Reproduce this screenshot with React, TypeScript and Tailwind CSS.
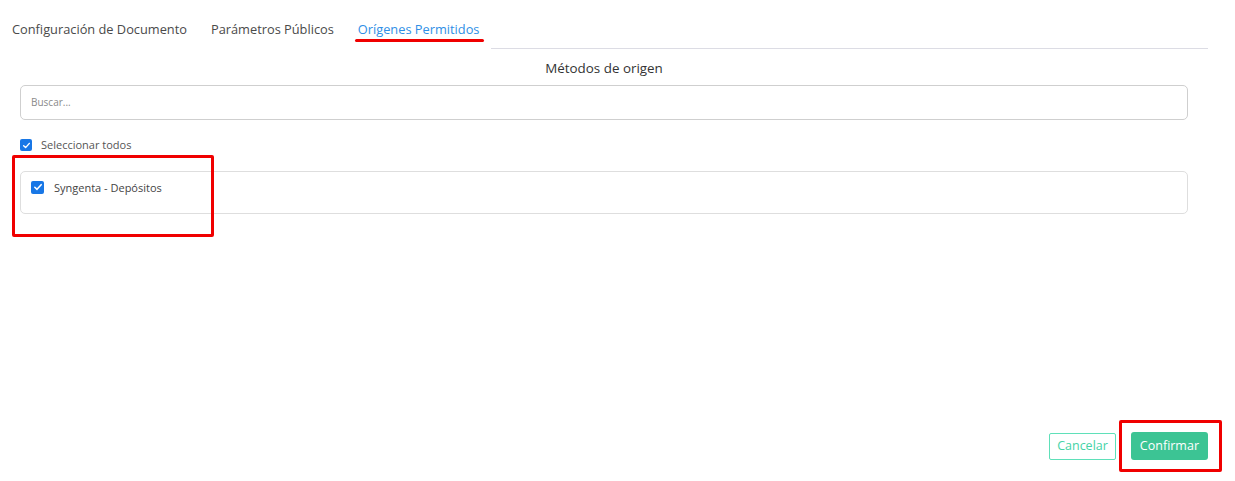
import React from "react";

function Check({ size = 13 }: { size?: number }) {
  return (
    <span
      className="inline-flex items-center justify-center rounded-[2px] bg-[#1877e6] shrink-0"
      style={{ width: size, height: size }}
    >
      <svg viewBox="0 0 12 12" width={size - 3} height={size - 3}>
        <path d="M2.2 6.3 L4.8 8.8 L9.8 3.2" fill="none" stroke="white" strokeWidth="1.9" strokeLinecap="round" strokeLinejoin="round" />
      </svg>
    </span>
  );
}

export default function App() {
  return (
    <div className="relative h-[481px] w-[1235px] bg-white flex flex-col" style={{ fontFamily: '"Open Sans", "Noto Sans", sans-serif' }}>
      {/* Tabs */}
      <div className="flex items-end w-[1208px] h-[49px]">
        <div className="flex items-end h-full">
          <div className="pl-[12px] pr-[24px] pb-[10px] text-[12.8px] text-[#4a4a4a]">Configuración de Documento</div>
          <div className="pr-[24px] pb-[10px] text-[12.8px] text-[#4a4a4a]">Parámetros Públicos</div>
          <div className="pb-[10px] pr-[12px] text-[12.8px] text-[#2f8fe6]">Orígenes Permitidos</div>
        </div>
        <div className="flex-1 border-b border-[#dcdce4]" />
      </div>

      <div className="w-[1208px] text-center text-[13.4px] text-[#333] font-medium mt-[9px]">Métodos de origen</div>

      <div className="mx-[20px] mt-[7px] w-[1168px] h-[35px] rounded-[5px] border border-[#cfcfcf] flex items-center pl-[10px] text-[10px] text-[#8a8a8a]">
        Buscar...
      </div>

      <div className="flex items-center gap-[9px] mx-[20px] mt-[17px]">
        <Check size={12} />
        <span className="text-[11px] text-[#555]">Seleccionar todos</span>
      </div>

      <div className="mx-[20px] mt-[17px] w-[1168px] h-[43px] rounded-[5px] border border-[#dedede] flex items-start pt-[9px] pl-[10px] gap-[10px]">
        <Check size={13} />
        <span className="text-[11px] text-[#444] leading-[14px]">Syngenta - Depósitos</span>
      </div>

      <div className="flex-1" />

      <div className="flex justify-end items-center gap-[15px] pr-[27px] pb-[21px]">
        <button className="h-[27px] px-[7px] rounded-[2px] border border-[#5fe0b9] text-[#45d3a6] text-[12.5px] bg-white">Cancelar</button>
        <button className="h-[28px] px-[9px] rounded-[3px] bg-[#3cc494] text-white text-[12.5px]">Confirmar</button>
      </div>

      {/* Annotations */}
      <div className="absolute left-[355px] top-[39px] w-[129px] h-[3px] bg-[#f00000] rounded-full" />
      <div className="absolute left-[12px] top-[155px] w-[202px] h-[82px] border-[3px] border-[#f00000] rounded-[2px]" />
      <div className="absolute left-[1119px] top-[420px] w-[103px] h-[52px] border-[3px] border-[#f00000] rounded-[2px]" />
    </div>
  );
}
